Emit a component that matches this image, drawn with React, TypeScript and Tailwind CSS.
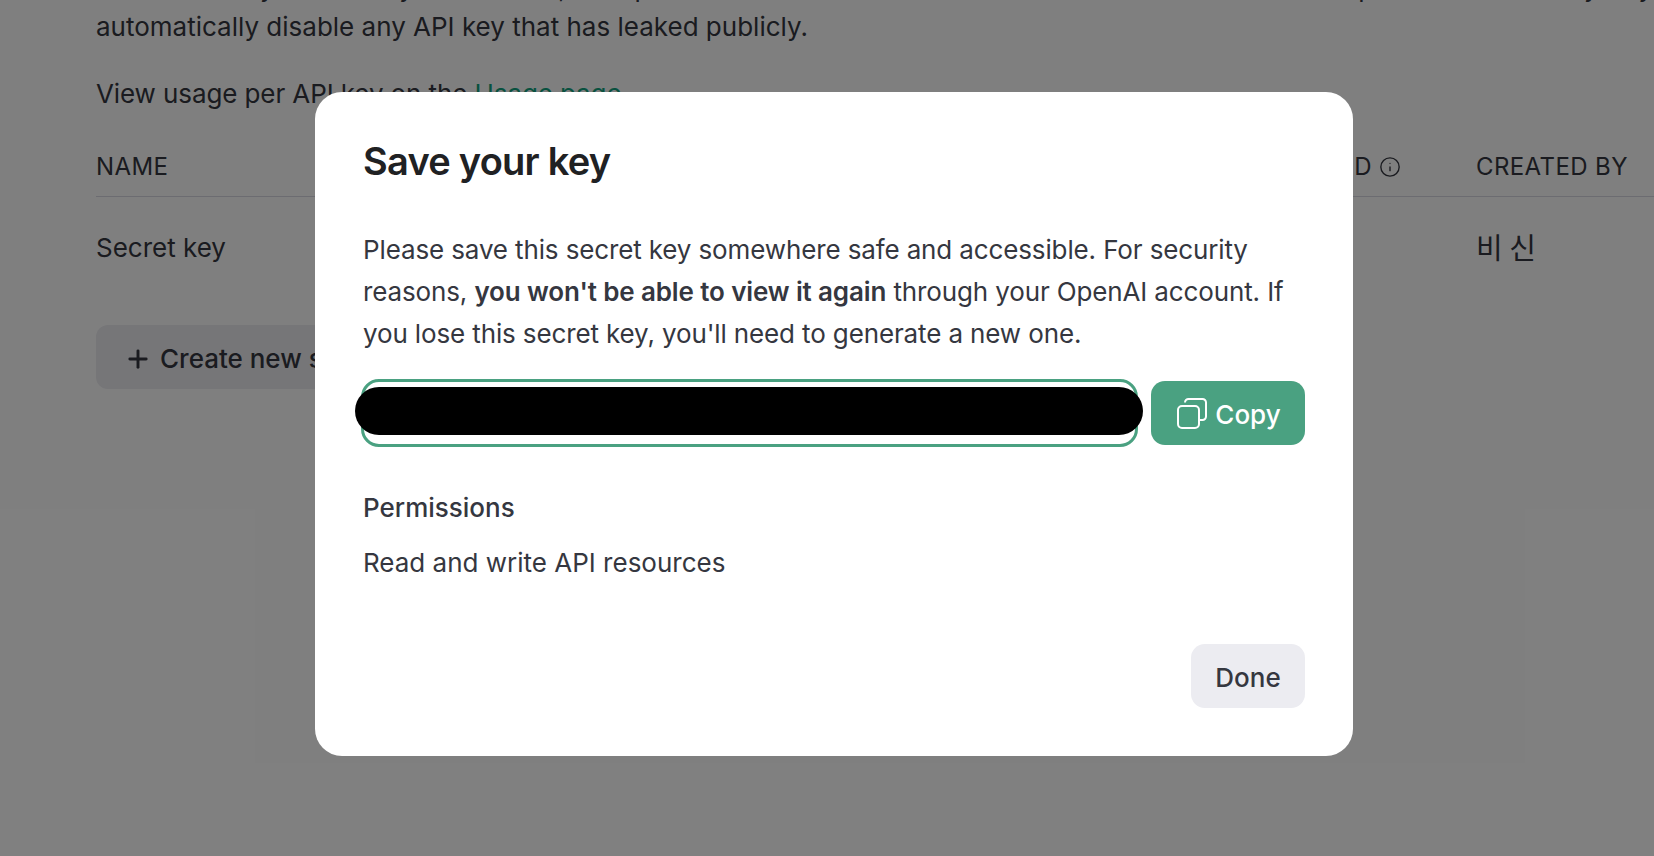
import React from 'react';
import { Plus, Info } from 'lucide-react';

export default function App() {
  return (
    <div className="relative h-[856px] w-full overflow-hidden bg-white font-['Inter',sans-serif] text-[#353740]">
      {/* page behind the dialog */}
      <div className="-mt-[32px] pl-[96px] text-[26px] leading-[42px]">
        <div className="leading-[39px] whitespace-nowrap">
          <p>Do not share your API key with others, or expose it in the browser or other client-side code. In order to protect the security of your account, OpenAI may also</p>
          <p>automatically disable any API key that has leaked publicly.</p>
        </div>
        <p className="mt-[27px] tracking-[-0.1px]">
          View usage per API key on the <span className="text-[#10a37f]">Usage page</span>.
        </p>

        <div className="mt-[36px] grid grid-cols-[1000px_380px_1fr] border-b border-[#d9d9e3] pb-[13px] text-[24px] leading-[32px] tracking-[0.4px]">
          <span>NAME</span>
          <span className="flex items-center justify-end gap-[7px] pr-[75px]">
            LAST USED
            <Info size={22} strokeWidth={1.5} />
          </span>
          <span>CREATED BY</span>
        </div>
        <div className="grid grid-cols-[1380px_1fr] pt-[35px] leading-[32px]">
          <span>Secret key</span>
          <span className="-mt-[2px] font-['Noto_Sans_CJK_KR',sans-serif] text-[29px]">비 신</span>
        </div>

        <button className="mt-[61px] flex h-[64px] items-center gap-[8px] rounded-[12px] bg-[#ececf1] px-[28px] pt-[3px] font-medium whitespace-nowrap">
          <Plus size={28} strokeWidth={2.5} />
          Create new secret key
        </button>
      </div>

      {/* dialog */}
      <div className="absolute inset-0 flex items-start justify-center bg-black/50 pl-[14px] pt-[92px]">
        <div className="flex h-[664px] w-[1038px] flex-col rounded-[27px] bg-white pl-[48px] pr-[48px] pt-[45px] text-[26px] leading-[42px] text-[#353740]">
          <h1 className="text-[38px] leading-[48px] font-semibold tracking-[-0.75px] text-[#202123]">Save your key</h1>
          <p className="mt-[44px] w-[936px] tracking-[-0.13px]">
            Please save this secret key somewhere safe and accessible. For security reasons, <strong className="font-semibold">you won't be able to view it again</strong> through your OpenAI account. If you lose this secret key, you'll need to generate a new one.
          </p>
          <div className="mt-[24px] -ml-[2px] flex items-center gap-[13px]">
            <div className="relative h-[68px] w-[777px] rounded-[18px] border-[3px] border-[#4aa181]">
              <div className="absolute -left-[9px] -right-[8px] top-[5px] h-[48px] rounded-full bg-black" />
            </div>
            <button className="flex h-[64px] w-[154px] items-center justify-center gap-[8px] rounded-[14px] bg-[#4aa181] pl-[2px] font-medium text-white">
              <svg width="30" height="31" viewBox="0 0 30 31" fill="none" stroke="currentColor" strokeWidth="2">
                <rect x="1" y="8" width="21" height="22" rx="4" />
                <path d="M8 4.5 a3.5 3.5 0 0 1 3.5-3.5 h14 a3.5 3.5 0 0 1 3.5 3.5 v14 a3.5 3.5 0 0 1-3.5 3.5 h-3.5" />
              </svg>
              <span className="pt-[3px]">Copy</span>
            </button>
          </div>
          <h2 className="mt-[40px] font-medium">Permissions</h2>
          <p className="mt-[13px]">Read and write API resources</p>
          <div className="mt-auto flex justify-end pb-[48px]">
            <button className="h-[64px] w-[114px] rounded-[14px] bg-[#ececf1] pt-[3px] font-medium">Done</button>
          </div>
        </div>
      </div>
    </div>
  );
}
